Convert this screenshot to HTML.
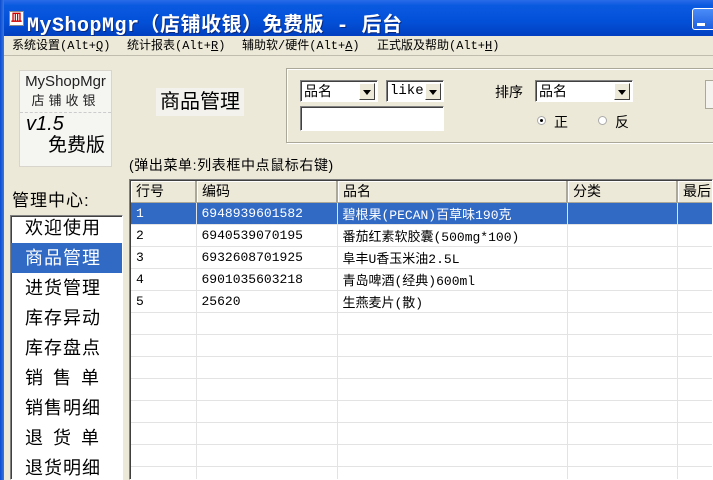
<!DOCTYPE html>
<html style="width:713px;height:480px;overflow:hidden"><head><meta charset="utf-8"><style>
*{margin:0;padding:0;box-sizing:border-box}
body{width:713px;height:480px;overflow:hidden;background:#ece9d8;font-family:"Liberation Sans","Noto Sans CJK SC","WenQuanYi Zen Hei",sans-serif;position:relative;font-size:12px;color:#000}
.a{position:absolute}
.title{left:0;top:0;width:713px;height:36px;background:linear-gradient(#2a6be8 0%,#0a5ae0 15%,#0350d8 60%,#0240c0 100%);}
.lb{left:0;top:0;width:4px;height:480px;background:linear-gradient(90deg,#0a4bd0,#3a78e0)}
.mono{font-family:"Liberation Mono","Noto Sans CJK SC",monospace}
.combo{background:#fff;border:1px solid;border-color:#808080 #fff #fff #808080;box-shadow:inset 1px 1px 0 #404040;height:22px;font-size:14px;padding:1px 3px;line-height:18px}
.btn{position:absolute;right:2px;top:2px;width:16px;height:17px;background:#ece9d8;border:1px solid;border-color:#fff #404040 #404040 #fff}
.btn:after{content:"";position:absolute;left:3px;top:6px;border:4px solid transparent;border-top:5px solid #000;border-bottom:0}
.list div{height:30px;font-size:18px;padding-left:14px;line-height:30px;letter-spacing:1px}
table{border-collapse:collapse;font-size:13px}
td{border-right:1px solid #e3e3e3;border-bottom:1px solid #e3e3e3;height:22px;padding-left:5px;white-space:nowrap;overflow:hidden}
th{background:#ece9d8;font-weight:normal;text-align:left;padding-left:5px;height:21px;font-size:14px;border-right:2px solid #aca899;border-bottom:1px solid #aca899;box-shadow:inset 1px 1px 0 #fff}
</style></head><body>
<div class="a title"></div>
<div class="a lb"></div>
<div class="a" style="left:9px;top:11px;width:15px;height:15px;background:#fff;border:1px solid #888;color:#c00;font-size:11px;line-height:13px;text-align:center;font-weight:bold">皿</div>
<div class="a mono" style="left:27px;top:8px;color:#fff;font-size:20px;font-weight:bold;letter-spacing:0.5px;text-shadow:1px 1px 0 #0a2a80">MyShopMgr（店铺收银）免费版 - 后台</div>
<div class="a" style="left:692px;top:8px;width:30px;height:22px;border:1px solid #fff;border-radius:3px;background:linear-gradient(#4a8cf8,#1d5ee0)"><div style="position:absolute;left:4px;top:14px;width:8px;height:3px;background:#fff"></div></div>
<div class="a mono" style="left:4px;top:36px;width:709px;height:20px;font-size:12px;line-height:20px;border-bottom:1px solid #c0bdae">
<span class="a" style="left:8px">系统设置(Alt+<u>Q</u>)</span>
<span class="a" style="left:123px">统计报表(Alt+<u>R</u>)</span>
<span class="a" style="left:238px">辅助软/硬件(Alt+<u>A</u>)</span>
<span class="a" style="left:373px">正式版及帮助(Alt+<u>H</u>)</span>
</div>
<div class="a" style="left:19px;top:70px;width:93px;height:97px;background:#f5f5f2;border:1px solid #d8d6cc">
<div style="text-align:center;font-size:15px;margin-top:2px;color:#222">MyShopMgr</div>
<div style="text-align:center;font-size:13px;letter-spacing:4px;color:#222">店铺收银</div>
<div style="border-top:1px dashed #ccc;margin-top:3px"></div>
<div style="font-size:20px;font-style:italic;padding-left:6px;line-height:22px">v1.5</div>
<div style="font-size:19px;text-align:right;padding-right:6px;line-height:22px">免费版</div>
</div>
<div class="a" style="left:156px;top:88px;width:88px;height:28px;background:#f3f2ec;font-size:20px;text-align:center;line-height:28px">商品管理</div>
<div class="a" style="left:286px;top:68px;width:440px;height:75px;border:1px solid #aca899;box-shadow:inset 1px 1px 0 #fff, 1px 1px 0 #fff"></div>
<div class="a combo" style="left:300px;top:80px;width:78px">品名<div class="btn"></div></div>
<div class="a combo mono" style="left:386px;top:80px;width:58px;font-size:14px">like<div class="btn"></div></div>
<div class="a combo" style="left:300px;top:106px;width:144px;height:25px"></div>
<div class="a" style="left:495px;top:82px;font-size:14px">排序</div>
<div class="a combo" style="left:535px;top:80px;width:98px">品名<div class="btn"></div></div>
<div class="a" style="left:537px;top:116px;width:9px;height:9px;border-radius:50%;background:#fff;border:1px solid #aaa"><div style="width:3px;height:3px;margin:2px;background:#000;border-radius:50%"></div></div>
<div class="a" style="left:554px;top:112px;font-size:14px">正</div>
<div class="a" style="left:598px;top:116px;width:9px;height:9px;border-radius:50%;background:#fff;border:1px solid #aaa"></div>
<div class="a" style="left:615px;top:112px;font-size:14px">反</div>
<div class="a" style="left:705px;top:80px;width:20px;height:29px;border:1px solid #aca899;background:#f4f3ee"></div>
<div class="a" style="left:129px;top:155px;font-size:14px;letter-spacing:0.6px">(弹出菜单:列表框中点鼠标右键)</div>
<div class="a" style="left:12px;top:186px;font-size:17px;letter-spacing:1px">管理中心:</div>
<div class="a list" style="left:10px;top:215px;width:113px;height:265px;overflow:hidden;background:#fff;border:1px solid;border-color:#808080 #fff #fff #808080;box-shadow:inset 1px 1px 0 #404040">
<div style="margin-top:-3px">欢迎使用</div>
<div style="background:#316ac5;color:#fff">商品管理</div>
<div>进货管理</div><div>库存异动</div><div>库存盘点</div>
<div style="letter-spacing:10px">销售单</div><div>销售明细</div>
<div style="letter-spacing:10px">退货单</div><div>退货明细</div>
</div>
<div class="a" style="left:129px;top:179px;width:584px;height:301px;background:#fff;border:1px solid;border-color:#808080 #fff #fff #808080;box-shadow:inset 1px 1px 0 #404040;overflow:hidden">
<table class="mono" style="margin:1px 0 0 1px;width:640px;table-layout:fixed">
<colgroup><col style="width:65px"><col style="width:141px"><col style="width:230px"><col style="width:110px"><col style="width:94px"></colgroup>
<tr><th>行号</th><th>编码</th><th>品名</th><th>分类</th><th>最后</th></tr>
<tr style="background:#316ac5;color:#fff"><td>1</td><td>6948939601582</td><td>碧根果(PECAN)百草味190克</td><td></td><td></td></tr>
<tr><td>2</td><td>6940539070195</td><td>番茄红素软胶囊(500mg*100)</td><td></td><td></td></tr>
<tr><td>3</td><td>6932608701925</td><td>阜丰U香玉米油2.5L</td><td></td><td></td></tr>
<tr><td>4</td><td>6901035603218</td><td>青岛啤酒(经典)600ml</td><td></td><td></td></tr>
<tr><td>5</td><td>25620</td><td>生燕麦片(散)</td><td></td><td></td></tr>
<tr><td></td><td></td><td></td><td></td><td></td></tr>
<tr><td></td><td></td><td></td><td></td><td></td></tr>
<tr><td></td><td></td><td></td><td></td><td></td></tr>
<tr><td></td><td></td><td></td><td></td><td></td></tr>
<tr><td></td><td></td><td></td><td></td><td></td></tr>
<tr><td></td><td></td><td></td><td></td><td></td></tr>
<tr><td></td><td></td><td></td><td></td><td></td></tr>
<tr><td></td><td></td><td></td><td></td><td></td></tr>
</table>
</div>
</body></html>
